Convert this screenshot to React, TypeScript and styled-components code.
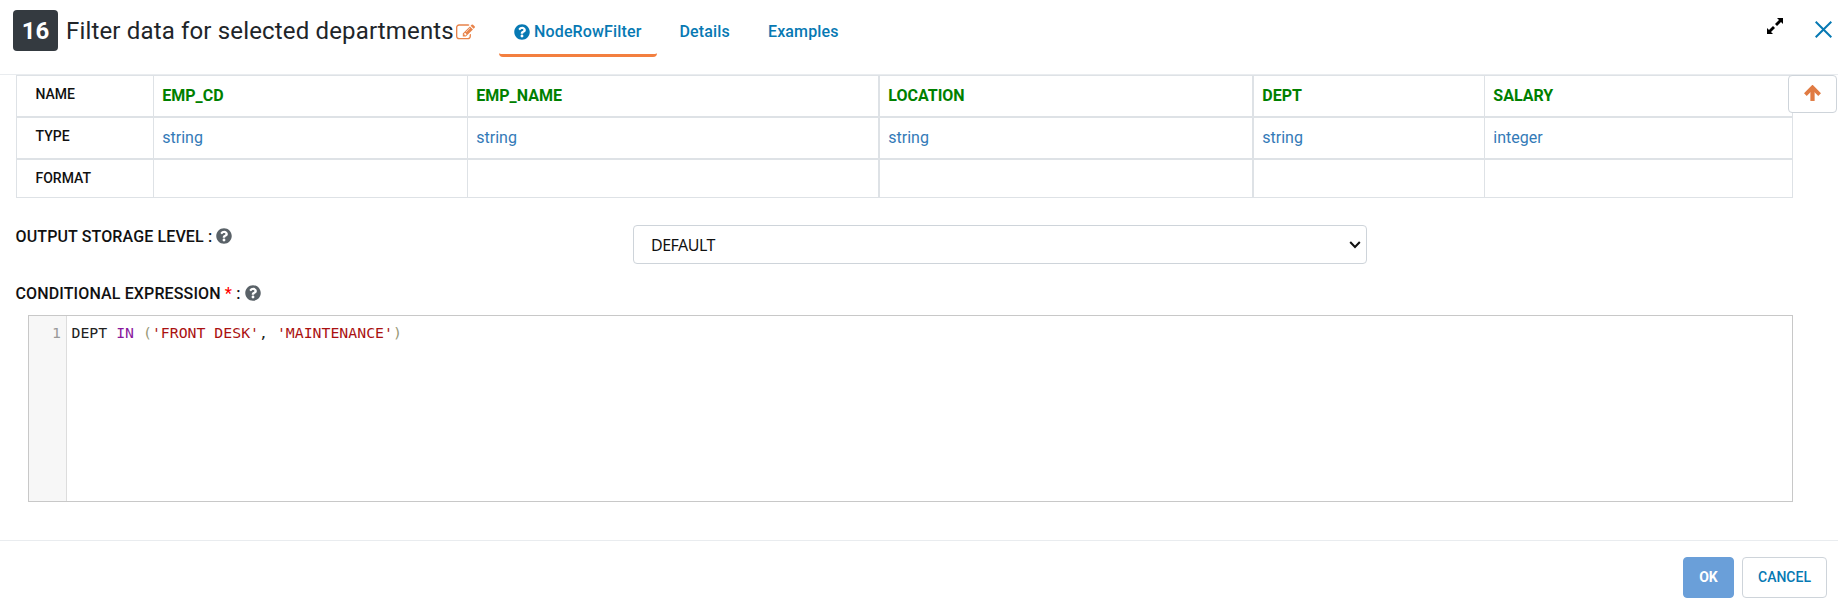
import React from "react";
import styled, { createGlobalStyle } from "styled-components";
import { FaQuestionCircle } from "react-icons/fa";

const Global = createGlobalStyle`
  *, *::before, *::after { box-sizing: border-box; }
  body { margin: 0; background: #fff; color: #212529; font-family: Roboto, "Liberation Sans", sans-serif; font-size: 16px; }
`;

const Dialog = styled.main`
  display: flex;
  flex-direction: column;
  height: 605px;
  overflow: hidden;
`;

const Header = styled.header`
  flex: none;
  display: flex;
  align-items: flex-start;
  height: 75px;
  padding: 10px 6px 0 13px;
  border-bottom: 1px solid #e9ecef;
`;

const StepBadge = styled.span`
  width: 45px;
  height: 41px;
  border-radius: 4px;
  background: #343a40;
  color: #fff;
  font-size: 24px;
  font-weight: 700;
  line-height: 42px;
  text-align: center;
`;

const Title = styled.h1`
  margin: 0 0 0 8px;
  width: 388px;
  font-size: 24px;
  font-weight: 400;
  line-height: 42px;
  letter-spacing: 0.16px;
  white-space: nowrap;
  color: #212529;
`;

const EditIcon = styled.svg`
  width: 19px;
  height: 17px;
  margin: 14px 0 0 2px;
  fill: #e8834a;
`;

const Tabs = styled.nav`
  display: flex;
  margin-left: 24px;
`;

const Tab = styled.a<{ $active?: boolean }>`
  display: flex;
  align-items: center;
  gap: 4px;
  height: 47px;
  padding: 0 15px 1px 15px;
  margin-right: 8px;
  border-bottom: 3px solid ${(p) => (p.$active ? "#f37f3f" : "transparent")};
  border-radius: 4px;
  color: #0779b3;
  font-size: 16px;
  font-weight: 500;
  letter-spacing: 0.15px;
`;

const HeaderActions = styled.div`
  display: flex;
  align-items: center;
  gap: 32px;
  height: 38px;
  margin-left: auto;
`;

const ExpandIcon = styled.svg`
  width: 16px;
  height: 16px;
  margin-bottom: 7px;
`;

const Body = styled.section`
  flex: 1;
  padding-left: 16px;
`;

const SchemaRow = styled.div`
  display: flex;
  align-items: flex-start;
`;

const Schema = styled.div`
  display: grid;
  grid-template-columns: 137px 314px 412px 374px 231px 308px;
  grid-template-rows: 42px 42px 38px;
  width: 1777px;
  border: solid #dee2e6;
  border-width: 1px 0 0 1px;
`;

const Cell = styled.div<{ $kind: "label" | "name" | "type"; $wide?: boolean; $last?: boolean }>`
  border: solid #dee2e6;
  border-width: 0 ${(p) => (p.$wide ? 2 : 1)}px ${(p) => (p.$last ? 1 : 2)}px 0;
  padding-left: ${(p) => (p.$kind === "label" ? 18.5 : 8.3)}px;
  padding-top: ${(p) => (p.$kind === "label" ? 0 : 2)}px;
  line-height: ${(p) => (p.$kind === "label" ? 37 : 36)}px;
  font-size: ${(p) => (p.$kind === "label" ? 14 : 16)}px;
  font-weight: ${(p) => ({ label: 500, name: 700, type: 400 })[p.$kind]};
  color: ${(p) => ({ label: "#111", name: "#008000", type: "#337ab7" })[p.$kind]};
`;

const CollapseButton = styled.button`
  display: flex;
  align-items: center;
  justify-content: center;
  flex: none;
  width: 49px;
  height: 38px;
  margin-left: -5px;
  padding: 0 0 3px;
  border: 1px solid #ced4da;
  border-radius: 4px;
  background: #fff;
  position: relative;
`;

const Field = styled.div<{ $top: number }>`
  display: flex;
  align-items: flex-start;
  margin-top: ${(p) => p.$top}px;
`;

const Label = styled.label`
  display: flex;
  align-items: center;
  gap: 4px;
  width: 617.5px;
  height: 22px;
  margin-left: -0.5px;
  font-weight: 500;
  font-size: 16px;
  letter-spacing: 0.13px;
  color: #111;
`;

const Required = styled.span`
  color: #f00;
`;

const HelpIcon = styled(FaQuestionCircle)`
  color: #5a6268;
`;

const Select = styled.div`
  display: flex;
  align-items: center;
  justify-content: space-between;
  width: 734px;
  height: 39px;
  padding: 0 5px 0 17px;
  border: 1px solid #ced4da;
  border-radius: 4px;
  font-family: "Noto Sans", sans-serif;
  font-size: 16px;
  letter-spacing: -0.5px;
  color: #111;
`;

const Editor = styled.div`
  display: flex;
  width: 1765px;
  height: 187px;
  margin: 11px 0 0 12px;
  border: 1px solid #c8c8c8;
  font-family: "DejaVu Sans Mono", monospace;
  font-size: 14.84px;
  line-height: 18px;
`;

const Gutter = styled.div`
  width: 38px;
  padding: 8px 5px 0 0;
  border-right: 1px solid #ddd;
  background: #f7f7f7;
  color: #999;
  text-align: right;
`;

const Code = styled.code`
  padding: 8px 0 0 4.5px;
  font: inherit;
  color: #222;
  white-space: pre;
`;

const Token = styled.span<{ $c: string }>`
  color: ${(p) => p.$c};
`;

const Footer = styled.footer`
  flex: none;
  display: flex;
  justify-content: flex-end;
  gap: 8px;
  height: 65px;
  padding: 16px 11px 0 0;
  border-top: 1px solid #e9ecef;
`;

const Button = styled.button<{ $primary?: boolean }>`
  width: ${(p) => (p.$primary ? 51 : 85)}px;
  height: 41px;
  padding: 0 0 1px;
  border: 1px solid ${(p) => (p.$primary ? "#6a9fd9" : "#ced4da")};
  border-radius: 4px;
  background: ${(p) => (p.$primary ? "#6a9fd9" : "#fff")};
  color: ${(p) => (p.$primary ? "#fff" : "#0779b3")};
  font-family: Roboto, sans-serif;
  font-size: 14px;
  font-weight: ${(p) => (p.$primary ? 700 : 500)};
`;

const columns = [
  { name: "EMP_CD", type: "string" },
  { name: "EMP_NAME", type: "string", wide: true },
  { name: "LOCATION", type: "string", wide: true },
  { name: "DEPT", type: "string" },
  { name: "SALARY", type: "integer" },
];

export default function App() {
  return (
    <Dialog>
      <Global />
      <Header>
        <StepBadge>16</StepBadge>
        <Title>Filter data for selected departments</Title>
        <EditIcon viewBox="0 0 1792 1536">
          <path d="M888 1056l116-116-152-152-116 116v56h96v96h56zm440-720q-16-16-33 1l-350 350q-17 17-1 33t33-1l350-350q17-17 1-33zm80 594v190q0 119-84.500 203.500t-203.500 84.500h-832q-119 0-203.500-84.500t-84.500-203.500v-832q0-119 84.500-203.500t203.500-84.500h832q63 0 117 25 15 7 18 23 3 17-9 29l-49 49q-14 14-32 8-23-6-45-6h-832q-66 0-113 47t-47 113v832q0 66 47 113t113 47h832q66 0 113-47t47-113v-126q0-13 9-22l64-64q15-15 35-7t20 29zm-96-738l288 288-672 672h-288v-288zm444 132l-92 92-288-288 92-92q28-28 68-28t68 28l152 152q28 28 28 68t-28 68z" />
        </EditIcon>
        <Tabs>
          <Tab $active><FaQuestionCircle size={16} />NodeRowFilter</Tab>
          <Tab>Details</Tab>
          <Tab>Examples</Tab>
        </Tabs>
        <HeaderActions>
          <ExpandIcon viewBox="0 0 16 16">
            <path d="M10 0h6v6l-2-2-4 4-2-2 4-4zM6 8l2 2-4 4 2 2H0v-6l2 2z" />
          </ExpandIcon>
          <svg width="17" height="17" viewBox="0 0 17 17" fill="none" stroke="#0779b3" strokeWidth="2">
            <path d="M.7.7l15.600 15.600M16.300.7L.7 16.300" />
          </svg>
        </HeaderActions>
      </Header>
      <Body>
        <SchemaRow>
          <Schema>
            <Cell $kind="label">NAME</Cell>
            {columns.map((c) => <Cell key={c.name} $kind="name" $wide={c.wide}>{c.name}</Cell>)}
            <Cell $kind="label">TYPE</Cell>
            {columns.map((c) => <Cell key={c.name} $kind="type" $wide={c.wide}>{c.type}</Cell>)}
            <Cell $kind="label" $last>FORMAT</Cell>
            {columns.map((c) => <Cell key={c.name} $kind="type" $wide={c.wide} $last />)}
          </Schema>
          <CollapseButton aria-label="Collapse">
            <svg width="17" height="16" viewBox="0 0 16 15" fill="none" stroke="#e07b43">
              <path d="M8 15V3" strokeWidth="4" />
              <path d="M1.300 9L8 2.200 14.700 9" strokeWidth="3.600" />
            </svg>
          </CollapseButton>
        </SchemaRow>
        <Field $top={27}>
          <Label><span>OUTPUT STORAGE LEVEL :</span><HelpIcon size={16} /></Label>
          <Select>
            DEFAULT
            <svg width="12" height="8" viewBox="0 0 12 8" fill="none" stroke="#111" strokeWidth="2">
              <path d="M1.200 1L6 6l4.800-5" />
            </svg>
          </Select>
        </Field>
        <Field $top={18}>
          <Label><span>CONDITIONAL EXPRESSION <Required>*</Required> :</span><HelpIcon size={16} /></Label>
        </Field>
        <Editor>
          <Gutter>1</Gutter>
          <Code>
            DEPT <Token $c="#8a1a9c">IN</Token> <Token $c="#999977">(</Token>
            <Token $c="#aa1111">'FRONT DESK'</Token>, <Token $c="#aa1111">'MAINTENANCE'</Token>
            <Token $c="#999977">)</Token>
          </Code>
        </Editor>
      </Body>
      <Footer>
        <Button $primary>OK</Button>
        <Button>CANCEL</Button>
      </Footer>
    </Dialog>
  );
}
